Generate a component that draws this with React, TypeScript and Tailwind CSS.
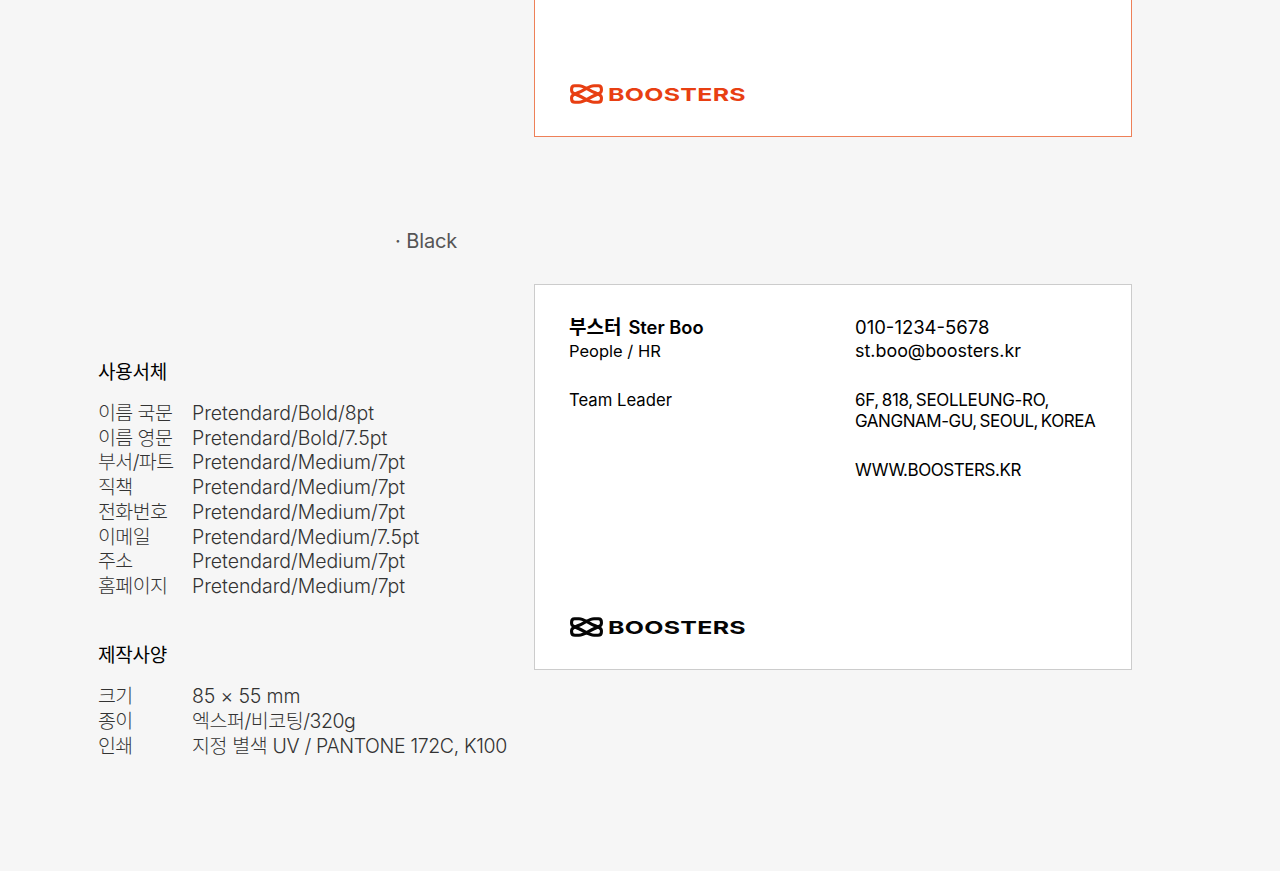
const sans = "font-['Inter','Noto_Sans_CJK_KR',sans-serif]";

const fonts = [
  ["이름 국문", "Pretendard/Bold/8pt", "tracking-[-0.06px]"],
  ["이름 영문", "Pretendard/Bold/7.5pt", "tracking-[-0.06px]"],
  ["부서/파트", "Pretendard/Medium/7pt", "tracking-[-0.06px]"],
  ["직책", "Pretendard/Medium/7pt", "tracking-[-0.06px]"],
  ["전화번호", "Pretendard/Medium/7pt", "tracking-[-0.06px]"],
  ["이메일", "Pretendard/Medium/7.5pt", "tracking-[-0.1px]"],
  ["주소", "Pretendard/Medium/7pt", "tracking-[-0.06px]"],
  ["홈페이지", "Pretendard/Medium/7pt", "tracking-[-0.06px]"],
];

const specs = [
  ["크기", "85 × 55 mm", "tracking-[-0.15px]"],
  ["종이", "엑스퍼/비코팅/320g", "tracking-[-0.45px]"],
  ["인쇄", "지정 별색 UV / PANTONE 172C, K100", "tracking-[-0.36px]"],
];

const loop =
  "M4.500 1.700H9C14 1.700 18.500 6 24.500 8.500C27.500 9.800 31.400 10.500 31.400 13.500V15C31.400 17.300 30 18.300 28 18.300H24C19 18.300 14.500 14 8.500 11.500C5.500 10.200 1.600 9.500 1.600 6.500V5C1.600 2.700 2.500 1.700 4.500 1.700Z";

function Logo({ color, className = "" }: { color: string; className?: string }) {
  return (
    <div className={`flex h-5 items-center gap-[5px] ${className}`} style={{ color }}>
      <svg width="33" height="20" viewBox="0 0 33 20" fill="none" stroke="currentColor" strokeWidth="3.100">
        <path d={loop} />
        <path d={loop} transform="matrix(-1 0 0 1 33 0)" />
      </svg>
      <span className={`${sans} mt-[2px] inline-block origin-left scale-x-[1.385] text-[18px] leading-5 font-bold tracking-[0.2px]`}>
        BOOSTERS
      </span>
    </div>
  );
}

function SpecList({ title, rows }: { title: string; rows: string[][] }) {
  return (
    <div>
      <h3 className="text-[19px] leading-[24px] font-normal tracking-[-0.2px] text-black">{title}</h3>
      <div className="mt-[16px]">
        {rows.map((row) => (
          <div key={row[0]} className="flex text-[19.500px] leading-[24.700px] font-light text-[#333]">
            <span className="w-[94px] shrink-0 tracking-[-0.6px] whitespace-nowrap">{row[0]}</span>
            <span className={`whitespace-nowrap ${row[2]}`}>{row[1]}</span>
          </div>
        ))}
      </div>
    </div>
  );
}

export default function App() {
  return (
    <div className={`${sans} h-[871px] w-full overflow-hidden bg-[#f6f6f6]`}>
      <div className="ml-[534px] flex h-[137px] w-[598px] items-end border-x border-b border-[#ee8058] bg-white pb-[32px] pl-[35px]">
        <Logo color="#e83f12" />
      </div>

      <p className="mt-[90px] ml-[395px] text-[20px] leading-[28px] tracking-[-0.1px] text-[#555]">· Black</p>

      <div className="mt-[29px] flex">
        <div className="w-[534px] pt-[77px] pl-[98px]">
          <SpecList title="사용서체" rows={fonts} />
          <div className="mt-[45.700px]">
            <SpecList title="제작사양" rows={specs} />
          </div>
        </div>

        <div className="flex h-[386px] w-[598px] flex-col justify-between border border-[#ccc] bg-white pt-[30px] pr-[34px] pb-[32px] pl-[34px] text-black">
          <div className="flex">
            <div className="w-[286px] shrink-0">
              <p className="h-[24px] text-[18.300px] leading-[24px] font-semibold">
                <span className="text-[19px]">부스터</span>
                <span className="ml-[7px]">Ster Boo</span>
              </p>
              <p className="text-[16.500px] leading-[24px]">People / HR</p>
              <p className="mt-[24px] text-[16.700px] leading-[26px]">Team Leader</p>
            </div>
            <div className="whitespace-nowrap">
              <p className="text-[18.500px] leading-[24px]">010-1234-5678</p>
              <p className="text-[17.900px] leading-[23px]">st.boo@boosters.kr</p>
              <p className="mt-[28px] text-[17px] leading-[21px] [word-spacing:-1.500px]">
                <span className="tracking-[-0.33px]">6F, 818, SEOLLEUNG-RO,</span>
                <br />
                <span className="tracking-[-0.47px]">GANGNAM-GU, SEOUL, KOREA</span>
              </p>
              <p className="mt-[28px] text-[17px] leading-[21px] tracking-[-0.45px]">WWW.BOOSTERS.KR</p>
            </div>
          </div>
          <Logo color="#050505" className="ml-[1px]" />
        </div>
      </div>
    </div>
  );
}
